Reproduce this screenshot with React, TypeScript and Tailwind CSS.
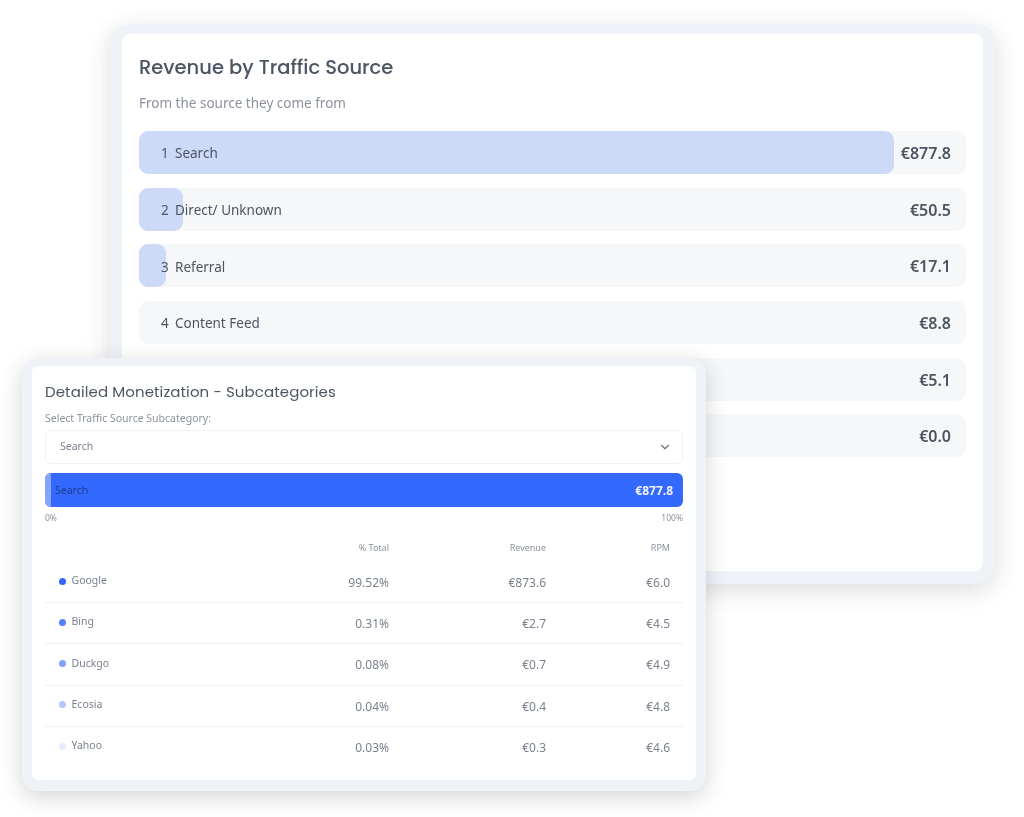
import { ChevronDown } from "lucide-react";

const heading = "font-['Poppins','Inter','Liberation_Sans',sans-serif]";

const sources = [
  { n: "1", name: "Search", value: "€877.8", fill: 755 },
  { n: "2", name: "Direct/ Unknown", value: "€50.5", fill: 44 },
  { n: "3", name: "Referral", value: "€17.1", fill: 27 },
  { n: "4", name: "Content Feed", value: "€8.8", fill: 0 },
  { n: "", name: "", value: "€5.1", fill: 0 },
  { n: "", name: "", value: "€0.0", fill: 0 },
];

const subs = [
  { name: "Google", pct: "99.52%", rev: "€873.6", rpm: "€6.0", dot: "bg-[#3366ff]" },
  { name: "Bing", pct: "0.31%", rev: "€2.7", rpm: "€4.5", dot: "bg-[#5580fb]" },
  { name: "Duckgo", pct: "0.08%", rev: "€0.7", rpm: "€4.9", dot: "bg-[#82a2fb]" },
  { name: "Ecosia", pct: "0.04%", rev: "€0.4", rpm: "€4.8", dot: "bg-[#b4c7fc]" },
  { name: "Yahoo", pct: "0.03%", rev: "€0.3", rpm: "€4.6", dot: "bg-[#e6ecfd]" },
];

function SourceRow({ n, name, value, fill }: (typeof sources)[number]) {
  return (
    <div className="relative flex h-[43px] items-center rounded-[9px] bg-[#f6f7f9] pl-[22px] pr-[14px]">
      {fill > 0 && (
        <div className="absolute inset-y-0 left-0 rounded-[9px] bg-[#cddaf7]" style={{ width: fill }} />
      )}
      <span className="relative mt-[1.5px] w-[14px] text-[13.5px] text-[#4b5563]">{n}</span>
      <span className="relative mt-[1.5px] text-[13.5px] text-[#4b5563]">{name}</span>
      <span className="relative ml-auto mr-[1px] mt-[1px] text-[16px] font-semibold text-[#4b5563]">{value}</span>
    </div>
  );
}

export default function App() {
  return (
    <div className="relative h-[817px] w-[1024px] overflow-hidden bg-white font-['Noto_Sans','Open_Sans',sans-serif] blur-[0.6px]">
      <div className="ml-[110px] mt-[24px] inline-block h-[560px] w-[885px] rounded-[20px] bg-[#eff3f8] pb-[13px] pl-[12px] pr-[12px] pt-[10px] align-top shadow-[0_6px_24px_rgba(40,40,50,0.16)]">
        <div className="h-full rounded-[8px] bg-white px-[17px] pt-[20px]">
          <h2 className={`${heading} text-[19.5px] font-medium leading-[28px] text-[#4b5563]`}>Revenue by Traffic Source</h2>
          <p className="mt-[11px] text-[13.5px] leading-[20px] text-[#8b929e]">From the source they come from</p>
          <div className="mt-[18px] flex flex-col gap-[13.7px]">
            {sources.map((s, i) => (
              <SourceRow key={i} {...s} />
            ))}
          </div>
        </div>
      </div>

      <div className="absolute left-[22px] top-[358px] h-[433px] w-[684px] rounded-[16px] bg-[#eff3f8] pb-[11px] pl-[10px] pr-[10px] pt-[8px] shadow-[0_6px_22px_rgba(40,40,50,0.2)]">
        <div className="h-full rounded-[6px] bg-white px-[13px] pt-[16px]">
          <h3 className={`${heading} text-[15px] leading-[20px] tracking-[0.1px] text-[#4b5563]`}>Detailed Monetization - Subcategories</h3>
          <p className="mt-[9px] text-[10.5px] leading-[14px] text-[#8b929e]">Select Traffic Source Subcategory:</p>
          <div className="mt-[5px] flex h-[34px] items-center justify-between rounded-[6px] border border-[#f0f1f4] pl-[14px] pr-[10px] text-[10.5px] text-[#7b828e]">
            <span>Search</span>
            <ChevronDown size={14} strokeWidth={2} className="text-[#6b7280]" />
          </div>
          <div className="relative mt-[9px] flex h-[34px] items-center justify-between overflow-hidden rounded-[6px] bg-[#3369ff] pl-[10px] pr-[10px]">
            <div className="absolute inset-y-0 left-0 w-[6px] bg-[#85a5fc]" />
            <span className="relative mt-[2px] text-[10.5px] text-[#1e3a8a]">Search</span>
            <span className="mt-[1px] text-[12px] font-bold text-[#eef2ff]">€877.8</span>
          </div>
          <div className="mt-[5px] flex justify-between text-[8.5px] leading-[12px] text-[#8b929e]">
            <span>0%</span>
            <span>100%</span>
          </div>
          <div className="mt-[17px] grid h-[14px] grid-cols-[234px_110px_157px_124px] items-center pr-[13px] text-right text-[9px] text-[#8b929e]">
            <span />
            <span>% Total</span>
            <span>Revenue</span>
            <span>RPM</span>
          </div>
          <div className="mt-[7px]">
            {subs.map((r, i) => (
              <div
                key={r.name}
                className={`grid h-[41.2px] grid-cols-[234px_110px_157px_124px] items-center pr-[13px] pt-[2px] text-right text-[12px] text-[#7b828e] ${i < 4 ? "border-b border-[#f0f1f4]" : ""}`}
              >
                <span className="mb-[4px] flex items-center gap-[6px] pl-[13.5px] text-left text-[10.5px]">
                  <span className={`h-[7px] w-[7px] rounded-full ${r.dot}`} />
                  {r.name}
                </span>
                <span>{r.pct}</span>
                <span>{r.rev}</span>
                <span>{r.rpm}</span>
              </div>
            ))}
          </div>
        </div>
      </div>
    </div>
  );
}
